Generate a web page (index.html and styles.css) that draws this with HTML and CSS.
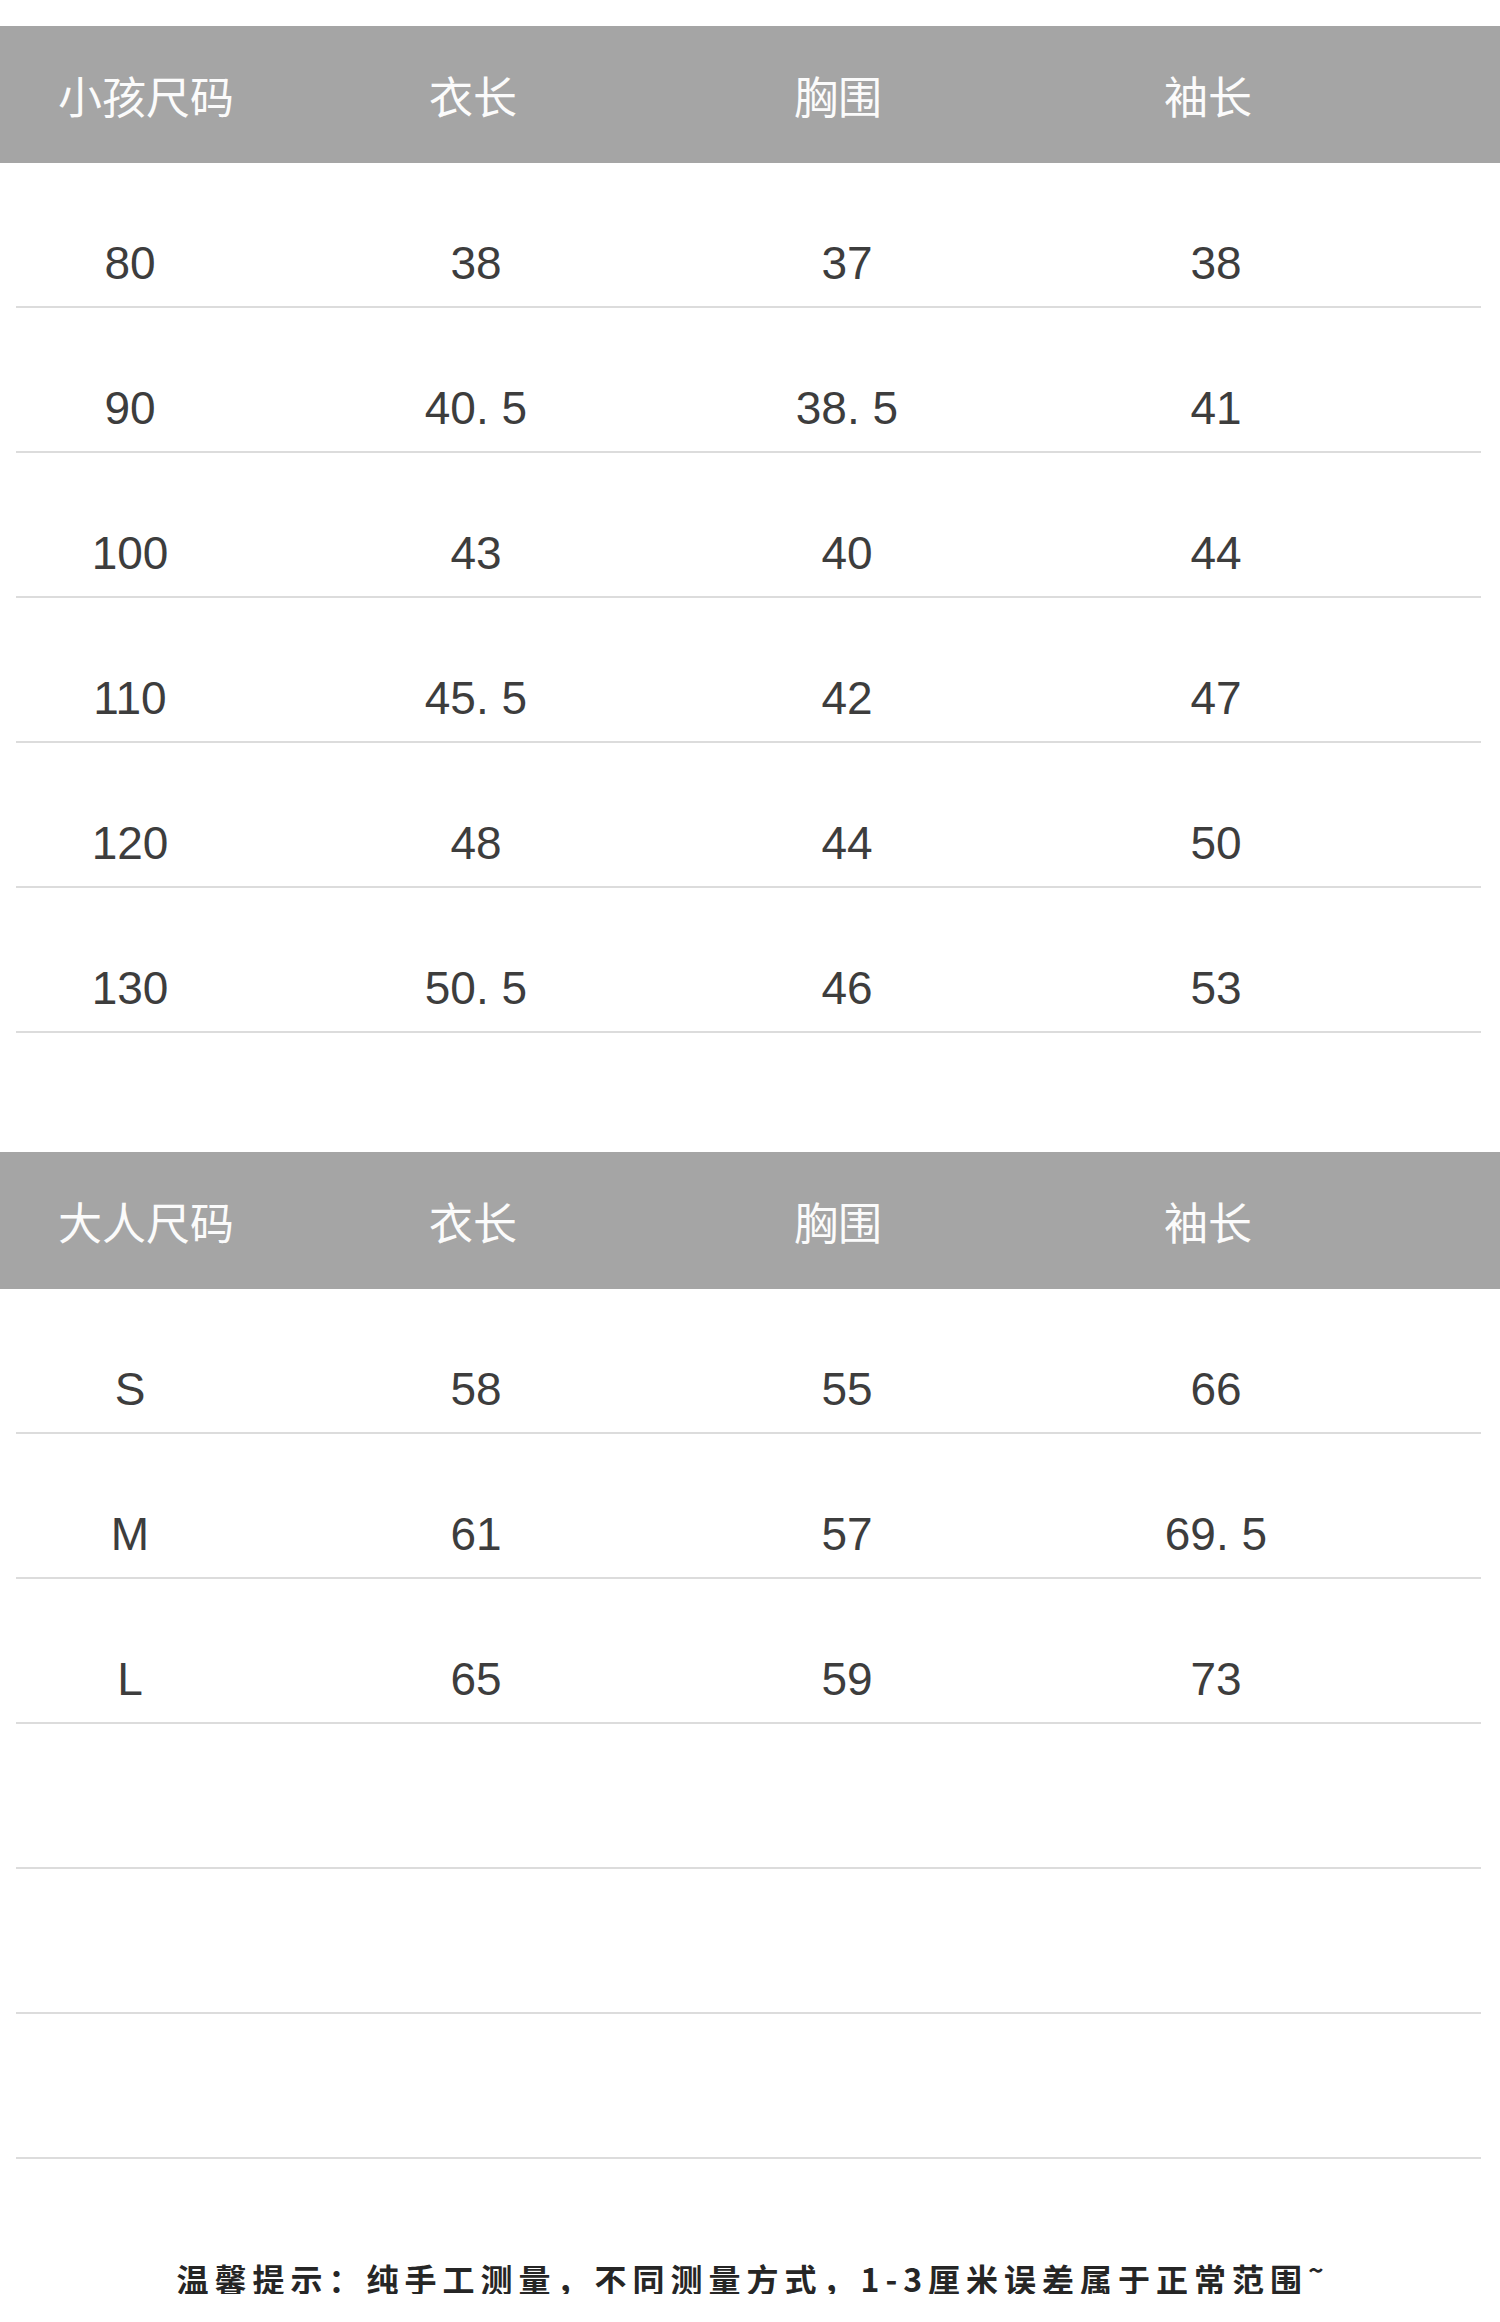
FILE: index.html
```html
<!DOCTYPE html>
<html lang="zh-CN">
<head>
<meta charset="utf-8">
<title>尺码表</title>
<link rel="stylesheet" href="styles.css">
</head>
<body>
<div class="page">
  <section class="size-table">
    <div class="thead">
      <div>小孩尺码</div><div>衣长</div><div>胸围</div><div>袖长</div>
    </div>
    <div class="row"><div>80</div><div>38</div><div>37</div><div>38</div></div>
    <div class="row"><div>90</div><div>40<span class="dot">.</span>5</div><div>38<span class="dot">.</span>5</div><div>41</div></div>
    <div class="row"><div>100</div><div>43</div><div>40</div><div>44</div></div>
    <div class="row"><div>110</div><div>45<span class="dot">.</span>5</div><div>42</div><div>47</div></div>
    <div class="row"><div>120</div><div>48</div><div>44</div><div>50</div></div>
    <div class="row"><div>130</div><div>50<span class="dot">.</span>5</div><div>46</div><div>53</div></div>
  </section>

  <section class="size-table">
    <div class="thead">
      <div>大人尺码</div><div>衣长</div><div>胸围</div><div>袖长</div>
    </div>
    <div class="row"><div>S</div><div>58</div><div>55</div><div>66</div></div>
    <div class="row"><div>M</div><div>61</div><div>57</div><div>69<span class="dot">.</span>5</div></div>
    <div class="row"><div>L</div><div>65</div><div>59</div><div>73</div></div>
    <div class="row"><div></div><div></div><div></div><div></div></div>
    <div class="row"><div></div><div></div><div></div><div></div></div>
    <div class="row"><div></div><div></div><div></div><div></div></div>
  </section>

  <p class="tip">温馨提示：纯手工测量，不同测量方式，1-3厘米误差属于正常范围<span class="tilde">~</span></p>
</div>
</body>
</html>
```

FILE: styles.css
```css
html, body {
  margin: 0;
  padding: 0;
  background: #ffffff;
}

.page {
  width: 1500px;
  padding-top: 26px;
  display: flex;
  flex-direction: column;
  gap: 119px;
}

.size-table {
  display: flex;
  flex-direction: column;
}

.thead {
  height: 137px;
  background: #a5a5a5;
  display: grid;
  grid-template-columns: 292px 362px 368px 372px;
  align-items: center;
  text-align: center;
  color: #fbfbfb;
  font-family: "Noto Sans CJK SC", "Noto Sans", sans-serif;
  font-size: 44px;
  font-weight: 400;
  line-height: 44px;
}

.row {
  box-sizing: border-box;
  height: 145px;
  margin: 0 19px 0 16px;
  padding-top: 77px;
  border-bottom: 2px solid #dcdcdc;
  display: grid;
  grid-template-columns: 228px 464px 278px 460px;
  text-align: center;
  color: #3d3d3d;
  font-family: "Liberation Sans", Arial, sans-serif;
  font-size: 46px;
  line-height: 46px;
}

.dot {
  margin-right: 0.28em;
}

.tip {
  margin: 0;
  margin-top: -25px;
  text-align: center;
  font-family: "Noto Sans CJK SC", "Noto Sans", sans-serif;
  font-size: 32px;
  line-height: 32px;
  font-weight: 700;
  letter-spacing: 6px;
  color: #262626;
}

.tilde {
  font-size: 26px;
  vertical-align: 0.45em;
  letter-spacing: 0;
}
```
